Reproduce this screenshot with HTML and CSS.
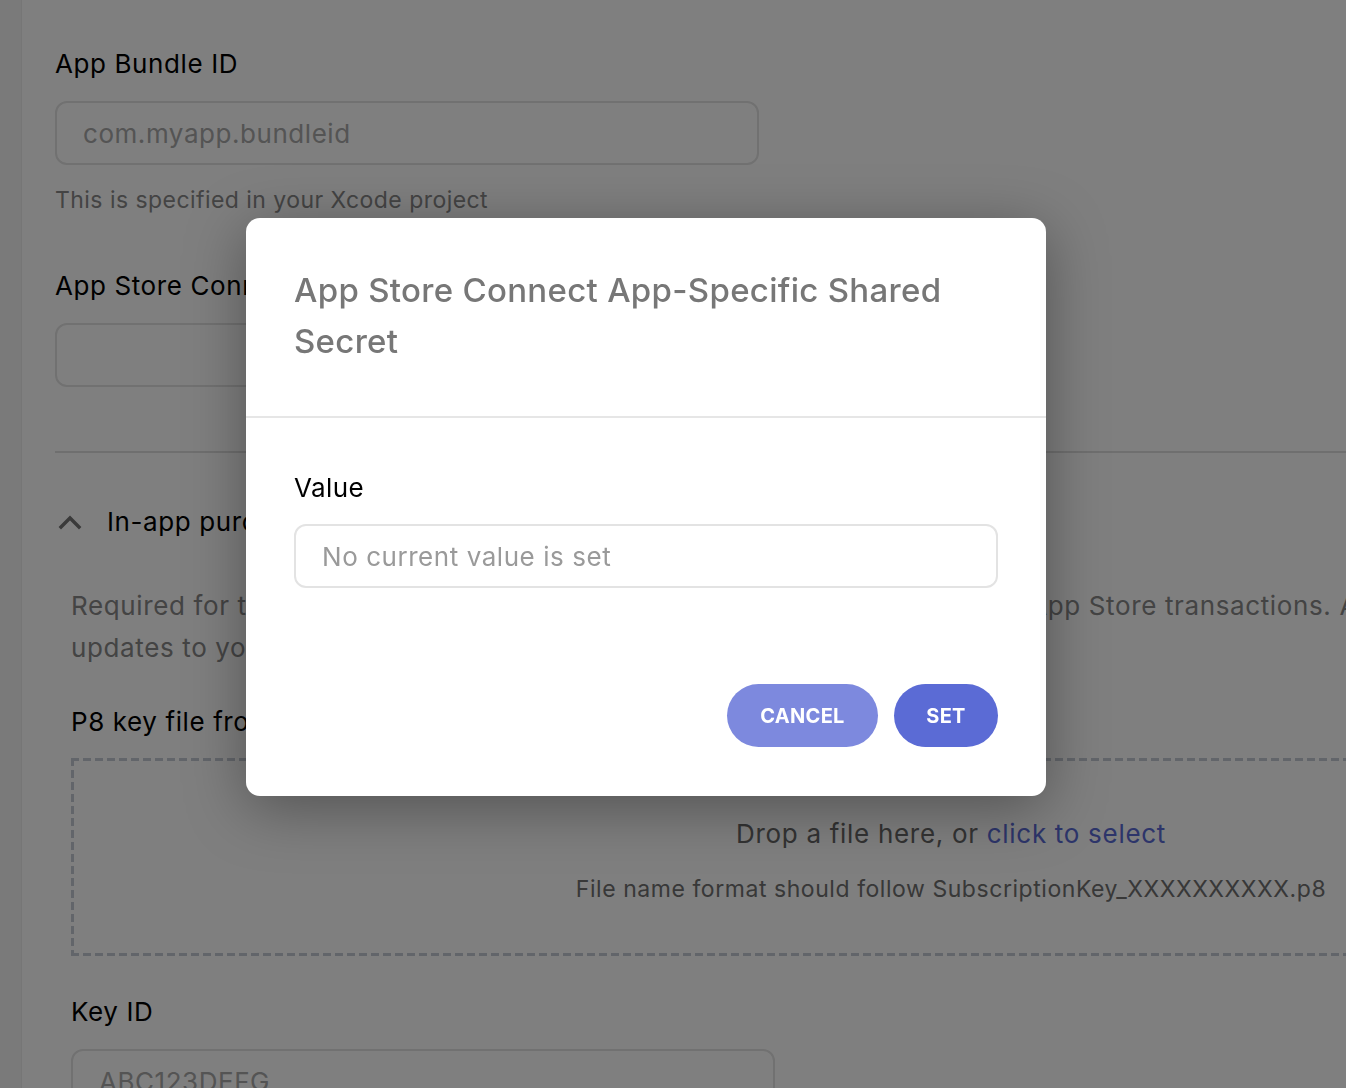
FILE: index.html
```html
<!DOCTYPE html>
<html>
<head>
<meta charset="utf-8">
<link rel="stylesheet" href="styles.css">
</head>
<body>
<div class="page">
  <aside class="side"></aside>
  <main class="main">
    <div class="field">
      <div class="label">App Bundle ID</div>
      <div class="input"><span class="ph">com.myapp.bundleid</span></div>
      <div class="help">This is specified in your Xcode project</div>
    </div>
    <div class="field second">
      <div class="label">App Store Connect App-Specific Shared Secret</div>
      <div class="input"></div>
    </div>
    <div class="divider"></div>
    <div class="section">
      <div class="sec-head">
        <svg class="chev" width="24" height="16" viewBox="0 0 24 16"><path d="M3 13 L12 4 L21 13" fill="none" stroke="#747474" stroke-width="3.4" stroke-linecap="square"/></svg>
        <span class="sec-title">In-app purchases</span>
      </div>
      <div class="sec-body">
        <p class="desc">Required for the verification of in-app purchases and subscriptions within App Store transactions. App Store sends real-time<br>updates to your server for subscription events.</p>
        <div class="label p8">P8 key file from App Store Connect</div>
        <div class="drop">
          <div class="drop-main">Drop a file here, or <span class="link">click to select</span></div>
          <div class="drop-sub">File name format should follow SubscriptionKey_XXXXXXXXXX.p8</div>
        </div>
        <div class="label keyid">Key ID</div>
        <div class="input"><span class="ph">ABC123DEFG</span></div>
      </div>
    </div>
  </main>
</div>
<div class="overlay"></div>
<div class="modal">
  <div class="modal-head">
    <h2 class="modal-title">App Store Connect App-Specific Shared Secret</h2>
  </div>
  <div class="modal-body">
    <div class="m-label">Value</div>
    <div class="m-input"><span class="m-ph">No current value is set</span></div>
    <div class="actions">
      <button class="btn cancel">CANCEL</button>
      <button class="btn set">SET</button>
    </div>
  </div>
</div>
</body>
</html>
```
FILE: styles.css
```css
html, body {
  margin: 0;
  padding: 0;
  overflow: hidden;
  height: 1088px;
}
body {
  font-family: Inter, "Noto Sans", sans-serif;
  background: #fff;
  color: #000;
}
.page {
  display: flex;
  width: 1900px;
  min-height: 1088px;
}
.side {
  width: 21px;
  flex: none;
  background: #f4f4f4;
  border-right: 1px solid #ececec;
}
.main {
  padding-left: 33px;
  padding-top: 46px;
  width: 1800px;
}
.label {
  font-size: 26px;
  line-height: 36px;
  letter-spacing: 0.6px;
  color: #000;
}
.input {
  box-sizing: border-box;
  width: 704px;
  height: 64px;
  margin-top: 19px;
  border: 2px solid #e2e2e2;
  border-radius: 12px;
  padding-left: 26px;
  display: flex;
  align-items: center;
}
.ph {
  font-size: 26px;
  letter-spacing: 0.55px;
  color: #a8a8a8;
}
.help {
  font-size: 23px;
  line-height: 30px;
  letter-spacing: 0.45px;
  margin-top: 20px;
  color: #888;
}
.second {
  margin-top: 53px;
}
.divider {
  height: 2px;
  background: #dedede;
  margin-top: 64px;
  width: 1760px;
}
.section {
  margin-top: 51px;
}
.sec-head {
  display: flex;
  align-items: center;
  height: 36px;
}
.chev {
  margin-left: 3px;
  margin-right: 25px;
}
.sec-title {
  font-size: 26px;
  line-height: 36px;
  letter-spacing: 0.6px;
}
.sec-body {
  padding-left: 16px;
}
.desc {
  margin: 45px 0 0;
  font-size: 26px;
  line-height: 42px;
  letter-spacing: 0.63px;
  color: #888;
  white-space: nowrap;
}
.sec-body .label.p8 {
  margin-top: 35px;
}
.drop {
  box-sizing: border-box;
  width: 1760px;
  height: 198px;
  margin-top: 18px;
  background:
    repeating-linear-gradient(to right, #c4cbd4 0 8px, transparent 8px 12px) left top / 100% 3px no-repeat,
    repeating-linear-gradient(to right, #c4cbd4 0 8px, transparent 8px 12px) left bottom / 100% 3px no-repeat,
    repeating-linear-gradient(to bottom, #c4cbd4 0 8px, transparent 8px 12px) left top / 3px 100% no-repeat,
    repeating-linear-gradient(to bottom, #c4cbd4 0 8px, transparent 8px 12px) right top / 3px 100% no-repeat;
  display: flex;
  flex-direction: column;
  align-items: center;
  padding-top: 58px;
}
.drop-main {
  font-size: 26px;
  line-height: 36px;
  letter-spacing: 0.7px;
  color: #666;
}
.link {
  color: #5b6bd5;
}
.drop-sub {
  margin-top: 22px;
  font-size: 23px;
  line-height: 30px;
  letter-spacing: 0.55px;
  color: #707070;
}
.sec-body .label.keyid {
  margin-top: 38px;
}
.overlay {
  position: fixed;
  inset: 0;
  background: rgba(0, 0, 0, 0.5);
}
.modal {
  position: absolute;
  left: 246px;
  top: 218px;
  width: 800px;
  background: #fff;
  border-radius: 14px;
  box-shadow: 0 12px 60px rgba(0, 0, 0, 0.35);
}
.modal-head {
  padding: 47px 48px 49px;
  border-bottom: 2px solid #e6e6e6;
}
.modal-title {
  margin: 0;
  font-size: 33px;
  line-height: 51px;
  font-weight: 500;
  color: #777;
  letter-spacing: 0.3px;
}
.modal-body {
  padding: 52px 48px 49px;
}
.m-label {
  font-size: 26px;
  line-height: 36px;
  letter-spacing: 0.4px;
  color: #000;
}
.m-input {
  box-sizing: border-box;
  height: 64px;
  margin-top: 18px;
  border: 2px solid #e3e3e3;
  border-radius: 12px;
  padding-left: 26px;
  display: flex;
  align-items: center;
}
.m-ph {
  font-size: 26px;
  letter-spacing: 0.55px;
  color: #9a9a9a;
}
.actions {
  display: flex;
  justify-content: flex-end;
  gap: 16px;
  margin-top: 96px;
}
.btn {
  height: 63px;
  border: none;
  border-radius: 32px;
  color: #fff;
  font-family: Inter, sans-serif;
  font-weight: 700;
  font-size: 20px;
  letter-spacing: 0.3px;
  padding: 0;
}
.cancel {
  background: #7d89de;
  width: 151px;
}
.set {
  background: #5b6bd5;
  width: 104px;
}
```
